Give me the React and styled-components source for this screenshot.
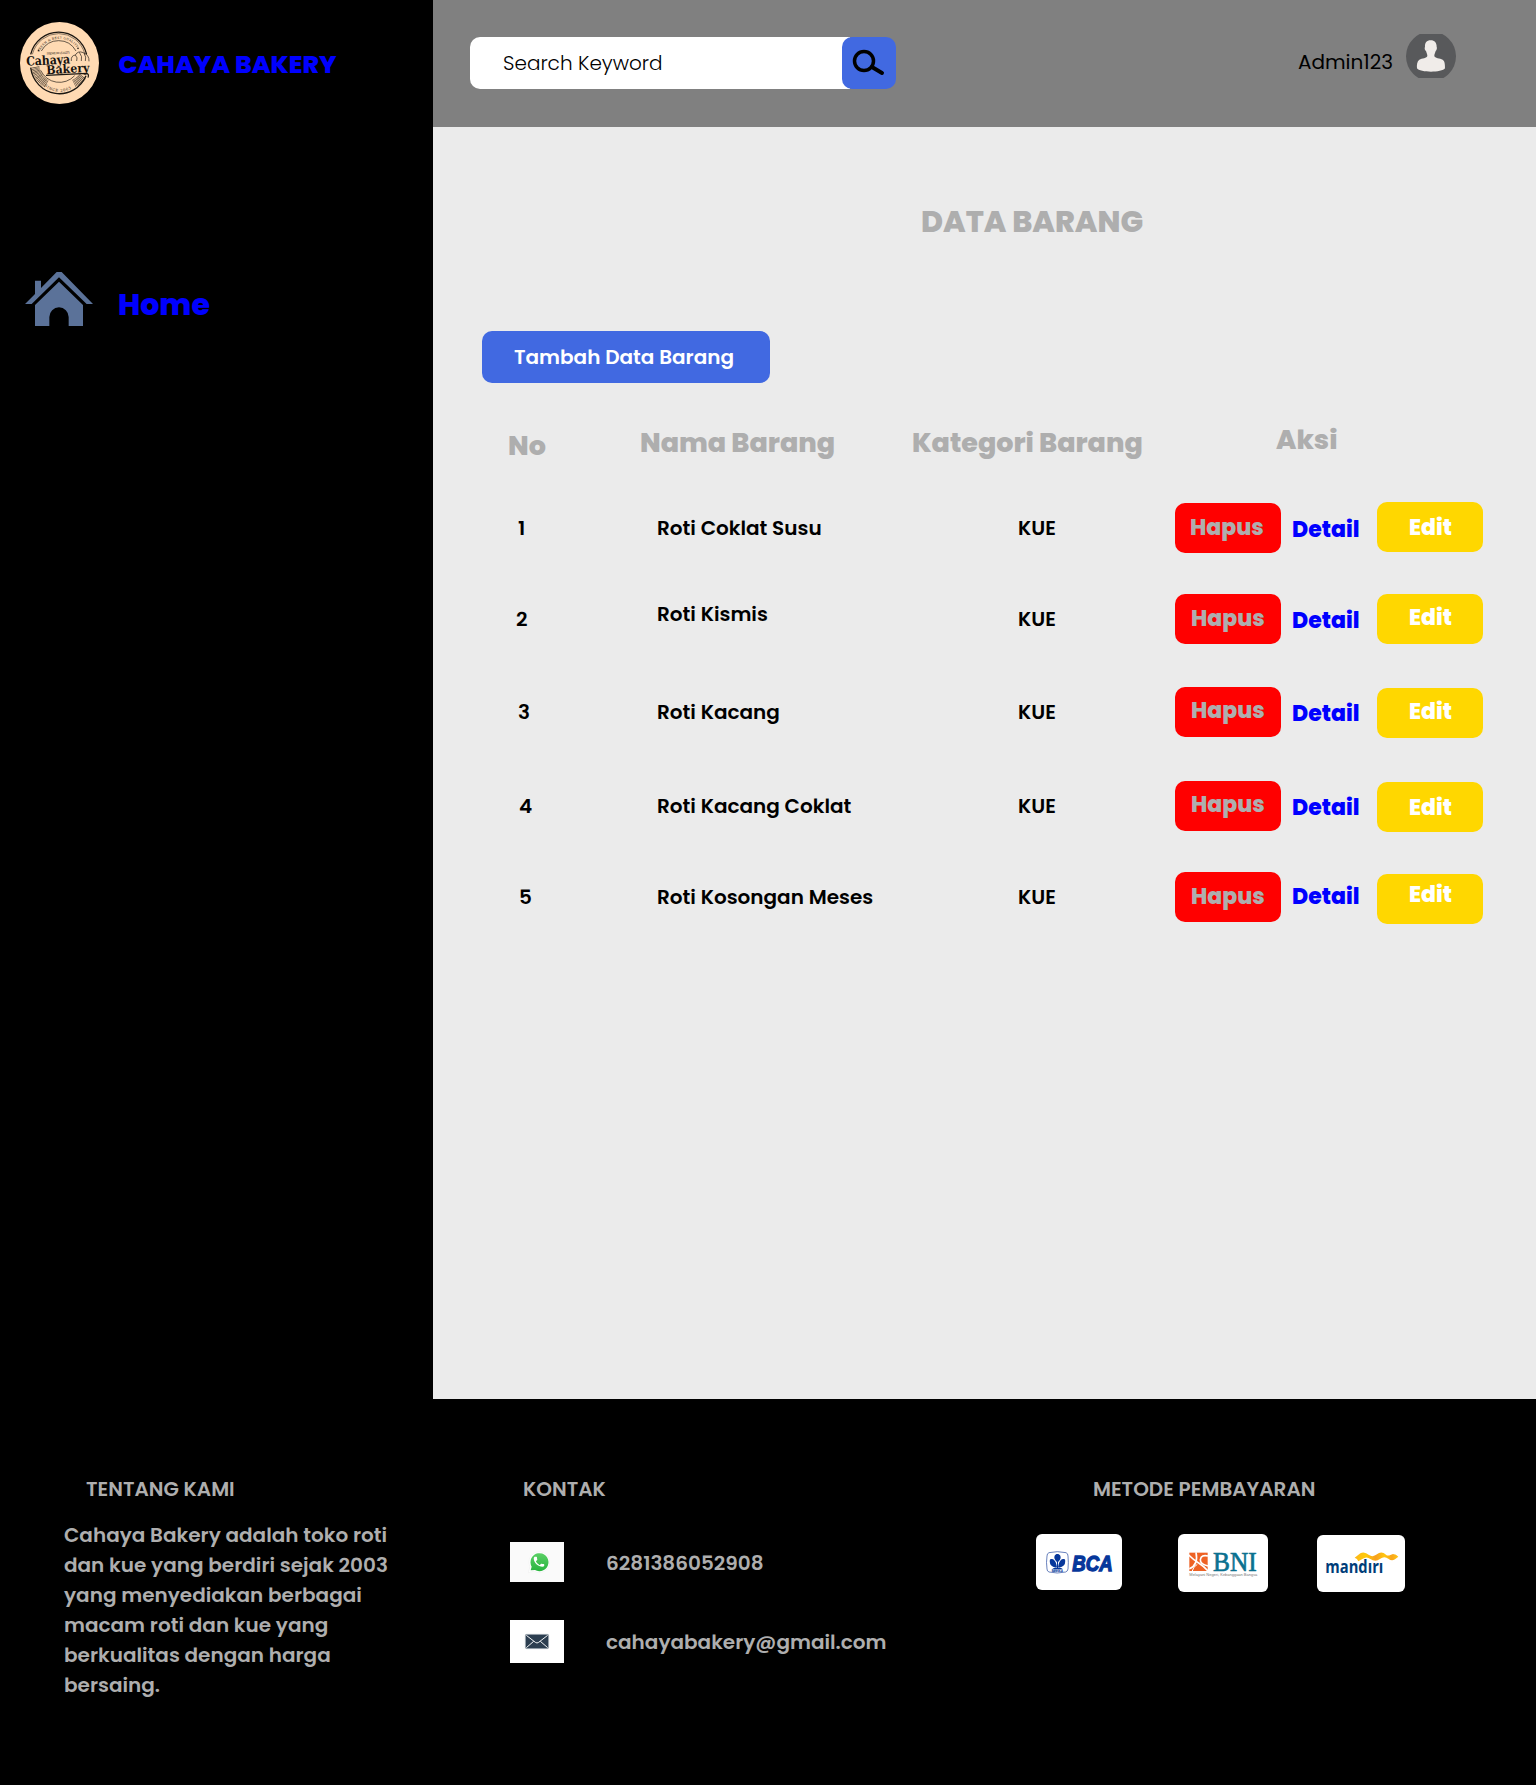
import React from "react";
import styled, { createGlobalStyle } from "styled-components";

const Global = createGlobalStyle`
  * { box-sizing: border-box; }
  body { margin: 0; background: #000; }
`;

const Page = styled.div`
  width: 1536px;
  height: 1785px;
  overflow: hidden;
  display: flex;
  flex-direction: column;
  background: #000;
  font-family: Poppins, Inter, "Open Sans", sans-serif;
`;

const Upper = styled.div`
  display: flex;
  flex: none;
  height: 1399px;
`;

const Text = styled.span`
  display: block;
  flex: none;
  width: max-content;
  white-space: nowrap;
  color: ${(p) => p.$color || "#000"};
  font-size: ${(p) => p.$size || 20}px;
  font-weight: ${(p) => p.$weight || 600};
  line-height: ${(p) => p.$line || 30}px;
  margin: ${(p) => p.$top || 0}px 0 0 ${(p) => p.$left || 0}px;
`;

const Sidebar = styled.aside`
  width: 433px;
  flex: none;
`;

const Brand = styled.div`
  display: flex;
  align-items: flex-start;
  padding: 22px 0 0 20px;
`;

const NavItem = styled.a`
  display: flex;
  align-items: flex-start;
  padding: 168px 0 0 25px;
`;

const Content = styled.div`
  flex: 1;
  display: flex;
  flex-direction: column;
`;

const Header = styled.header`
  display: flex;
  flex: none;
  align-items: flex-start;
  height: 127px;
  padding: 0 80px 0 37px;
  background: #808080;
`;

const Search = styled.div`
  display: flex;
  margin-top: 37px;
`;

const Field = styled.div`
  width: 380px;
  height: 52px;
  padding: 11px 0 0 33px;
  border-radius: 10px 0 0 10px;
  background: #fff;
`;

const SearchButton = styled.button`
  width: 54px;
  height: 52px;
  margin-left: -8px;
  padding: 0;
  border: 0;
  border-radius: 10px;
  background: #4169e1;
  svg { display: block; }
`;

const Account = styled.div`
  display: flex;
  align-items: flex-start;
  gap: 13px;
  margin-left: auto;
  svg { margin-top: 34px; }
`;

const Main = styled.main`
  flex: 1;
  padding-top: 72px;
  background: #ebebeb;
`;

const AddButton = styled.button`
  display: flex;
  width: 288px;
  height: 52px;
  margin: 87px 0 0 49px;
  padding: 11px 0 0 32px;
  border: 0;
  border-radius: 10px;
  background: #4169e1;
  font: inherit;
`;

const TableRow = styled.div`
  display: grid;
  grid-template-columns: 133px 272px 265px 361px;
  align-items: start;
  height: ${(p) => p.$height}px;
  padding-left: 72px;
`;

const HeadRow = styled(TableRow)`
  margin-top: 34px;
`;

const Actions = styled.div`
  display: grid;
  grid-template-columns: 106px 96px 106px;
  align-items: start;
`;

const ActionButton = styled.button`
  display: flex;
  align-items: flex-start;
  width: 106px;
  height: 50px;
  margin-top: ${(p) => p.$top || 0}px;
  padding: 0;
  border: 0;
  border-radius: 10px;
  background: ${(p) => p.$bg};
  font: inherit;
`;

const Footer = styled.footer`
  display: grid;
  grid-template-columns: 510px 526px 1fr;
  align-items: start;
  padding-top: 75px;
`;

const About = styled.section`
  padding-left: 64px;
`;

const Paragraph = styled.div`
  margin-top: 16px;
`;

const ContactRow = styled.div`
  display: flex;
  align-items: flex-start;
  margin-top: ${(p) => p.$top}px;
`;

const IconTile = styled.div`
  width: 54px;
  height: ${(p) => p.$height}px;
  background: ${(p) => p.$bg};
  svg { display: block; }
`;

const Cards = styled.div`
  display: flex;
  align-items: flex-start;
  margin-top: 29px;
`;

const Card = styled.div`
  width: ${(p) => p.$w}px;
  height: ${(p) => p.$h}px;
  margin: ${(p) => p.$top}px 0 0 ${(p) => p.$left}px;
  border-radius: 6px;
  background: #fff;
  svg { display: block; }
`;

const GREY = "#aeaeae";

const Logo = () => (
  <svg width="79" height="82" viewBox="30 21 237 246">
    <defs>
      <path id="arcTop" d="M88 112 A64 62 0 0 1 208 112" />
      <path id="arcBottom" d="M103 212 A66 68 0 0 0 194 212" />
    </defs>
    <ellipse cx="148.500" cy="144" rx="118.500" ry="123" fill="#ffdab3" />
    <g fill="none" stroke="#1b1712">
      <path d="M62 118 A87 90 0 0 1 230 118" strokeWidth="4" />
      <path d="M67 118 A82 85 0 0 1 225 118" strokeWidth="1.500" />
      <path d="M94 108 A60 62 0 0 1 198 108" strokeWidth="2" />
      <path d="M62 158 A87 90 0 0 0 228 182" strokeWidth="4" />
      <path d="M92 166 A62 62 0 0 0 194 182" strokeWidth="2" />
      <path d="M76 156 A75 74 0 0 0 110 207" strokeWidth="24" strokeDasharray="2 2" opacity=".75" />
      <path d="M218 184 A75 74 0 0 1 192 205" strokeWidth="24" strokeDasharray="2 2" opacity=".75" />
      <path d="M108 181 L230 175 Q238 177 234 188" strokeWidth="3.500" />
      <path d="M184 138 Q182 122 196 120 Q204 106 220 113 Q238 120 237 139 M196 120 Q204 128 200 138 M208 112 Q218 124 214 138 M222 115 Q230 126 226 138" strokeWidth="2" />
    </g>
    <g fill="#17130f" fontFamily="'DejaVu Serif', serif">
      <text fontSize="9" letterSpacing="1"><textPath href="#arcTop">FRESH &amp; BEST QUALITY</textPath></text>
      <text x="110" y="117" fontSize="8" textLength="70" transform="rotate(-3 145 114)">PREMIUM QUALITY</text>
      <text x="49" y="149" fontSize="38" fontWeight="600" textLength="132" lengthAdjust="spacingAndGlyphs" transform="rotate(-3 115 145)">Cahaya</text>
      <text x="109" y="174" fontSize="36" fontWeight="600" textLength="130" lengthAdjust="spacingAndGlyphs" transform="rotate(-3 174 170)">Bakery</text>
      <text fontSize="11" letterSpacing="2"><textPath href="#arcBottom">SINCE 2003</textPath></text>
      <circle cx="86" cy="106" r="2.500" />
      <circle cx="204" cy="100" r="2.500" />
    </g>
  </svg>
);

const House = () => (
  <svg width="68" height="54" viewBox="75 816 204 162" fill="#5b7299">
    <path d="M75 912 L105 882 V842 H123 V864 L170 816 H185 L279 912 H260 L177 832 L95 912Z" />
    <path d="M177 845 L249 915 V978 H206 V951 A29 29 0 0 0 148 951 V978 H105 V915Z" />
  </svg>
);

const Magnifier = () => (
  <svg width="54" height="52" viewBox="1236 111 162 156" fill="none" stroke="#000" strokeLinecap="round">
    <circle cx="1302" cy="183" r="28.500" strokeWidth="10.500" />
    <path d="M1327 202 L1356 219" strokeWidth="12" />
  </svg>
);

const Avatar = () => (
  <svg width="50" height="44" viewBox="498 102 150 132">
    <circle cx="573" cy="169" r="75" fill="#58595b" />
    <path
      fill="#f0ece9"
      d="M572 121 C584 121 590 129 590 141 C592 143 590 152 587 153 C585 160 583 163 583 168 C584 175 600 175 608 179 C615 184 615 195 615 205 C612 212 590 215 573 215 C556 215 534 212 531 205 C530 195 531 184 538 179 C546 175 561 175 562 168 C562 163 560 160 558 153 C554 152 553 143 555 141 C554 129 560 121 572 121Z"
    />
  </svg>
);

const WhatsApp = () => (
  <svg width="54" height="40" viewBox="150 276 162 120">
    <defs>
      <linearGradient id="wa" x1="0" y1="0" x2="0" y2="1">
        <stop offset="0" stopColor="#5bd066" />
        <stop offset="1" stopColor="#27b43e" />
      </linearGradient>
    </defs>
    <path d="M205 368 L210 350 A31 31 0 1 1 222 363Z" fill="#fff" stroke="#ececec" strokeWidth="1.500" />
    <path d="M212 361 L215 350 A27 27 0 1 1 225 360Z" fill="url(#wa)" />
    <path
      transform="translate(216 315) scale(1.750)"
      fill="#fff"
      d="M6.620 10.790c1.440 2.830 3.760 5.140 6.590 6.590l2.200-2.200c.27-.27.67-.36 1.020-.24 1.120.37 2.330.57 3.570.57.55 0 1 .45 1 1V18c0 .55-.45 2-3 2-7.390 0-15-6.610-15-14 0-2 1.450-3 2-3h2.500c.55 0 1 .45 1 1 0 1.250.2 2.450.57 3.570.11.35.03.74-.25 1.020l-2.200 2.200z"
    />
  </svg>
);

const Envelope = () => (
  <svg width="54" height="43" viewBox="150 510 162 129">
    <rect x="196" y="553" width="70" height="43" rx="4" fill="#2c3e50" stroke="#b9c1c9" strokeWidth="2" />
    <path d="M199 556 L226 577 Q231 581 236 577 L263 556 M199 593 L221 574 M263 593 L241 574" fill="none" stroke="#f4f6f7" strokeWidth="3" />
  </svg>
);

const BcaLogo = () => (
  <svg width="87" height="57" viewBox="107 221 261 171">
    <path d="M146 277 Q171 271 197 277 Q203 279 203 287 Q205 306 203 326 Q202 333 196 335 Q171 341 146 335 Q140 333 140 326 Q137 306 140 287 Q140 279 146 277Z" fill="#fff" stroke="#1c429c" strokeWidth="2" />
    <g fill="#06379b">
      <path d="M171 281 C179 281 183 289 180 296 C178 301 174 303 173 306 H170 C169 303 165 301 163 296 C160 289 164 281 171 281Z" />
      <path d="M150 297 C157 293 165 299 168 312 L170 321 C160 322 150 316 149 308 C148 303 148 299 150 297Z" />
      <path d="M193 297 C186 293 178 299 175 312 L173 321 C183 322 193 316 194 308 C195 303 195 299 193 297Z" />
      <path d="M170 305 H173 V322 Q181 320 187 326 H156 Q162 320 170 322Z" />
      <text x="154" y="334" fontSize="8" fontWeight="700" fontFamily="'Liberation Sans', sans-serif" textLength="34">BANK BCA</text>
      <text x="216" y="332" fontSize="65" fontWeight="700" fontStyle="italic" fontFamily="'Liberation Sans', sans-serif" textLength="121" lengthAdjust="spacingAndGlyphs" stroke="#06379b" strokeWidth="4">BCA</text>
    </g>
  </svg>
);

const BniLogo = () => (
  <svg width="90" height="58" viewBox="534 221 270 174">
    <rect x="568" y="277" width="55" height="55" fill="#ee6224" />
    <g fill="none" stroke="#fff" strokeWidth="5">
      <path d="M566 284 Q582 300 596 308 Q612 318 624 332" />
      <path d="M568 325 Q596 314 588 276" />
      <path d="M624 287 Q604 282 601 298 Q600 312 624 317" />
      <path d="M576 334 Q580 318 592 312" strokeWidth="3" />
    </g>
    <text x="639" y="332" fontSize="82" fontFamily="'Liberation Serif', serif" fill="#0b7190" stroke="#0b7190" strokeWidth="2" textLength="131" lengthAdjust="spacingAndGlyphs">BNI</text>
    <text x="568" y="348" fontSize="11" fontFamily="'Liberation Sans', sans-serif" fill="#777" textLength="204" lengthAdjust="spacingAndGlyphs">Melayani Negeri, Kebanggaan Bangsa</text>
  </svg>
);

const MandiriLogo = () => (
  <svg width="88" height="58" viewBox="950 224 264 174">
    <defs>
      <linearGradient id="ribbon" x1="0" x2="1">
        <stop offset="0" stopColor="#fcb61a" />
        <stop offset=".25" stopColor="#ffcb0a" />
        <stop offset=".48" stopColor="#f7a01f" />
        <stop offset=".68" stopColor="#ffc60e" />
        <stop offset=".85" stopColor="#f9a51d" />
        <stop offset="1" stopColor="#ffc811" />
      </linearGradient>
    </defs>
    <path d="M1063 292 L1080 279 Q1092 272 1106 284 Q1116 291 1126 284 L1136 278 Q1147 274 1157 283 Q1162 288 1170 284 L1178 281 Q1188 282 1194 289 L1184 297 Q1174 304 1164 295 Q1154 287 1144 293 L1132 300 Q1120 303 1110 296 Q1099 287 1086 296 L1074 303 Q1071 294 1063 292Z" fill="url(#ribbon)" />
    <text x="975" y="339" fontSize="54" fontWeight="700" fontFamily="'Open Sans', sans-serif" fill="#003d79" textLength="174" lengthAdjust="spacingAndGlyphs">mandırı</text>
  </svg>
);

const items = [
  { no: "1", name: "Roti Coklat Susu", h: 91, noX: 13, nameY: 10, hx: 15, hy: 8, dy: 10, eTop: -1, ey: 9 },
  { no: "2", name: "Roti Kismis", h: 93, noX: 11, nameY: 5, hx: 16, hy: 8, dy: 10, eTop: 0, ey: 7 },
  { no: "3", name: "Roti Kacang", h: 94, noX: 13, nameY: 10, hx: 16, hy: 7, dy: 10, eTop: 1, ey: 7 },
  { no: "4", name: "Roti Kacang Coklat", h: 91, noX: 14, nameY: 10, hx: 16, hy: 7, dy: 10, eTop: 1, ey: 9 },
  { no: "5", name: "Roti Kosongan Meses", h: 60, noX: 14, nameY: 10, hx: 16, hy: 8, dy: 8, eTop: 2, ey: 4 },
];

const about = [
  "Cahaya Bakery adalah toko roti",
  "dan kue yang berdiri sejak 2003",
  "yang menyediakan berbagai",
  "macam roti dan kue yang",
  "berkualitas dengan harga",
  "bersaing.",
];

export default function App() {
  return (
    <Page>
      <Global />
      <Upper>
        <Sidebar>
          <Brand>
            <Logo />
            <Text $color="#00f" $size={25} $weight={800} $line={37} $left={19.5} $top={24}>CAHAYA BAKERY</Text>
          </Brand>
          <NavItem>
            <House />
            <Text $color="#00f" $size={30} $weight={800} $line={45} $left={25} $top={10}>Home</Text>
          </NavItem>
        </Sidebar>
        <Content>
          <Header>
            <Search>
              <Field><Text $weight={300}>Search Keyword</Text></Field>
              <SearchButton><Magnifier /></SearchButton>
            </Search>
            <Account>
              <Text $weight={400} $top={47}>Admin123</Text>
              <Avatar />
            </Account>
          </Header>
          <Main>
            <Text $color={GREY} $size={30} $weight={800} $line={45} $left={488}>DATA BARANG</Text>
            <AddButton><Text $color="#fff">Tambah Data Barang</Text></AddButton>
            <HeadRow $height={86}>
              <Text $color={GREY} $size={27} $weight={800} $line={41} $left={3} $top={8}>No</Text>
              <Text $color={GREY} $size={27} $weight={800} $line={41} $left={2} $top={5}>Nama Barang</Text>
              <Text $color={GREY} $size={27} $weight={800} $line={41} $left={2} $top={5}>Kategori Barang</Text>
              <Text $color={GREY} $size={27} $weight={800} $line={41} $left={101} $top={2}>Aksi</Text>
            </HeadRow>
            {items.map((r) => (
              <TableRow key={r.no} $height={r.h}>
                <Text $left={r.noX} $top={10}>{r.no}</Text>
                <Text $left={19} $top={r.nameY}>{r.name}</Text>
                <Text $left={108} $top={10}>KUE</Text>
                <Actions>
                  <ActionButton $bg="#f00">
                    <Text $color={GREY} $size={22} $weight={800} $line={33} $left={r.hx} $top={r.hy}>Hapus</Text>
                  </ActionButton>
                  <Text $color="#00f" $size={22} $weight={800} $line={33} $left={11} $top={r.dy}>Detail</Text>
                  <ActionButton $bg="#ffd700" $top={r.eTop}>
                    <Text $color="#fff" $size={22} $weight={800} $line={33} $left={32} $top={r.ey}>Edit</Text>
                  </ActionButton>
                </Actions>
              </TableRow>
            ))}
          </Main>
        </Content>
      </Upper>
      <Footer>
        <About>
          <Text $color={GREY} $left={22}>TENTANG KAMI</Text>
          <Paragraph>
            {about.map((line) => <Text key={line} $color={GREY}>{line}</Text>)}
          </Paragraph>
        </About>
        <section>
          <Text $color={GREY} $left={13}>KONTAK</Text>
          <ContactRow $top={38}>
            <IconTile $height={40} $bg="#fafafa"><WhatsApp /></IconTile>
            <Text $color={GREY} $left={42} $top={6}>6281386052908</Text>
          </ContactRow>
          <ContactRow $top={38}>
            <IconTile $height={43} $bg="#fff"><Envelope /></IconTile>
            <Text $color={GREY} $left={42} $top={7}>cahayabakery@gmail.com</Text>
          </ContactRow>
        </section>
        <section>
          <Text $color={GREY} $left={57}>METODE PEMBAYARAN</Text>
          <Cards>
            <Card $w={86.5} $h={56.5} $top={0.7} $left={-0.3}><BcaLogo /></Card>
            <Card $w={90} $h={58} $top={1} $left={55.8}><BniLogo /></Card>
            <Card $w={88} $h={57.5} $top={1.8} $left={48.5}><MandiriLogo /></Card>
          </Cards>
        </section>
      </Footer>
    </Page>
  );
}
